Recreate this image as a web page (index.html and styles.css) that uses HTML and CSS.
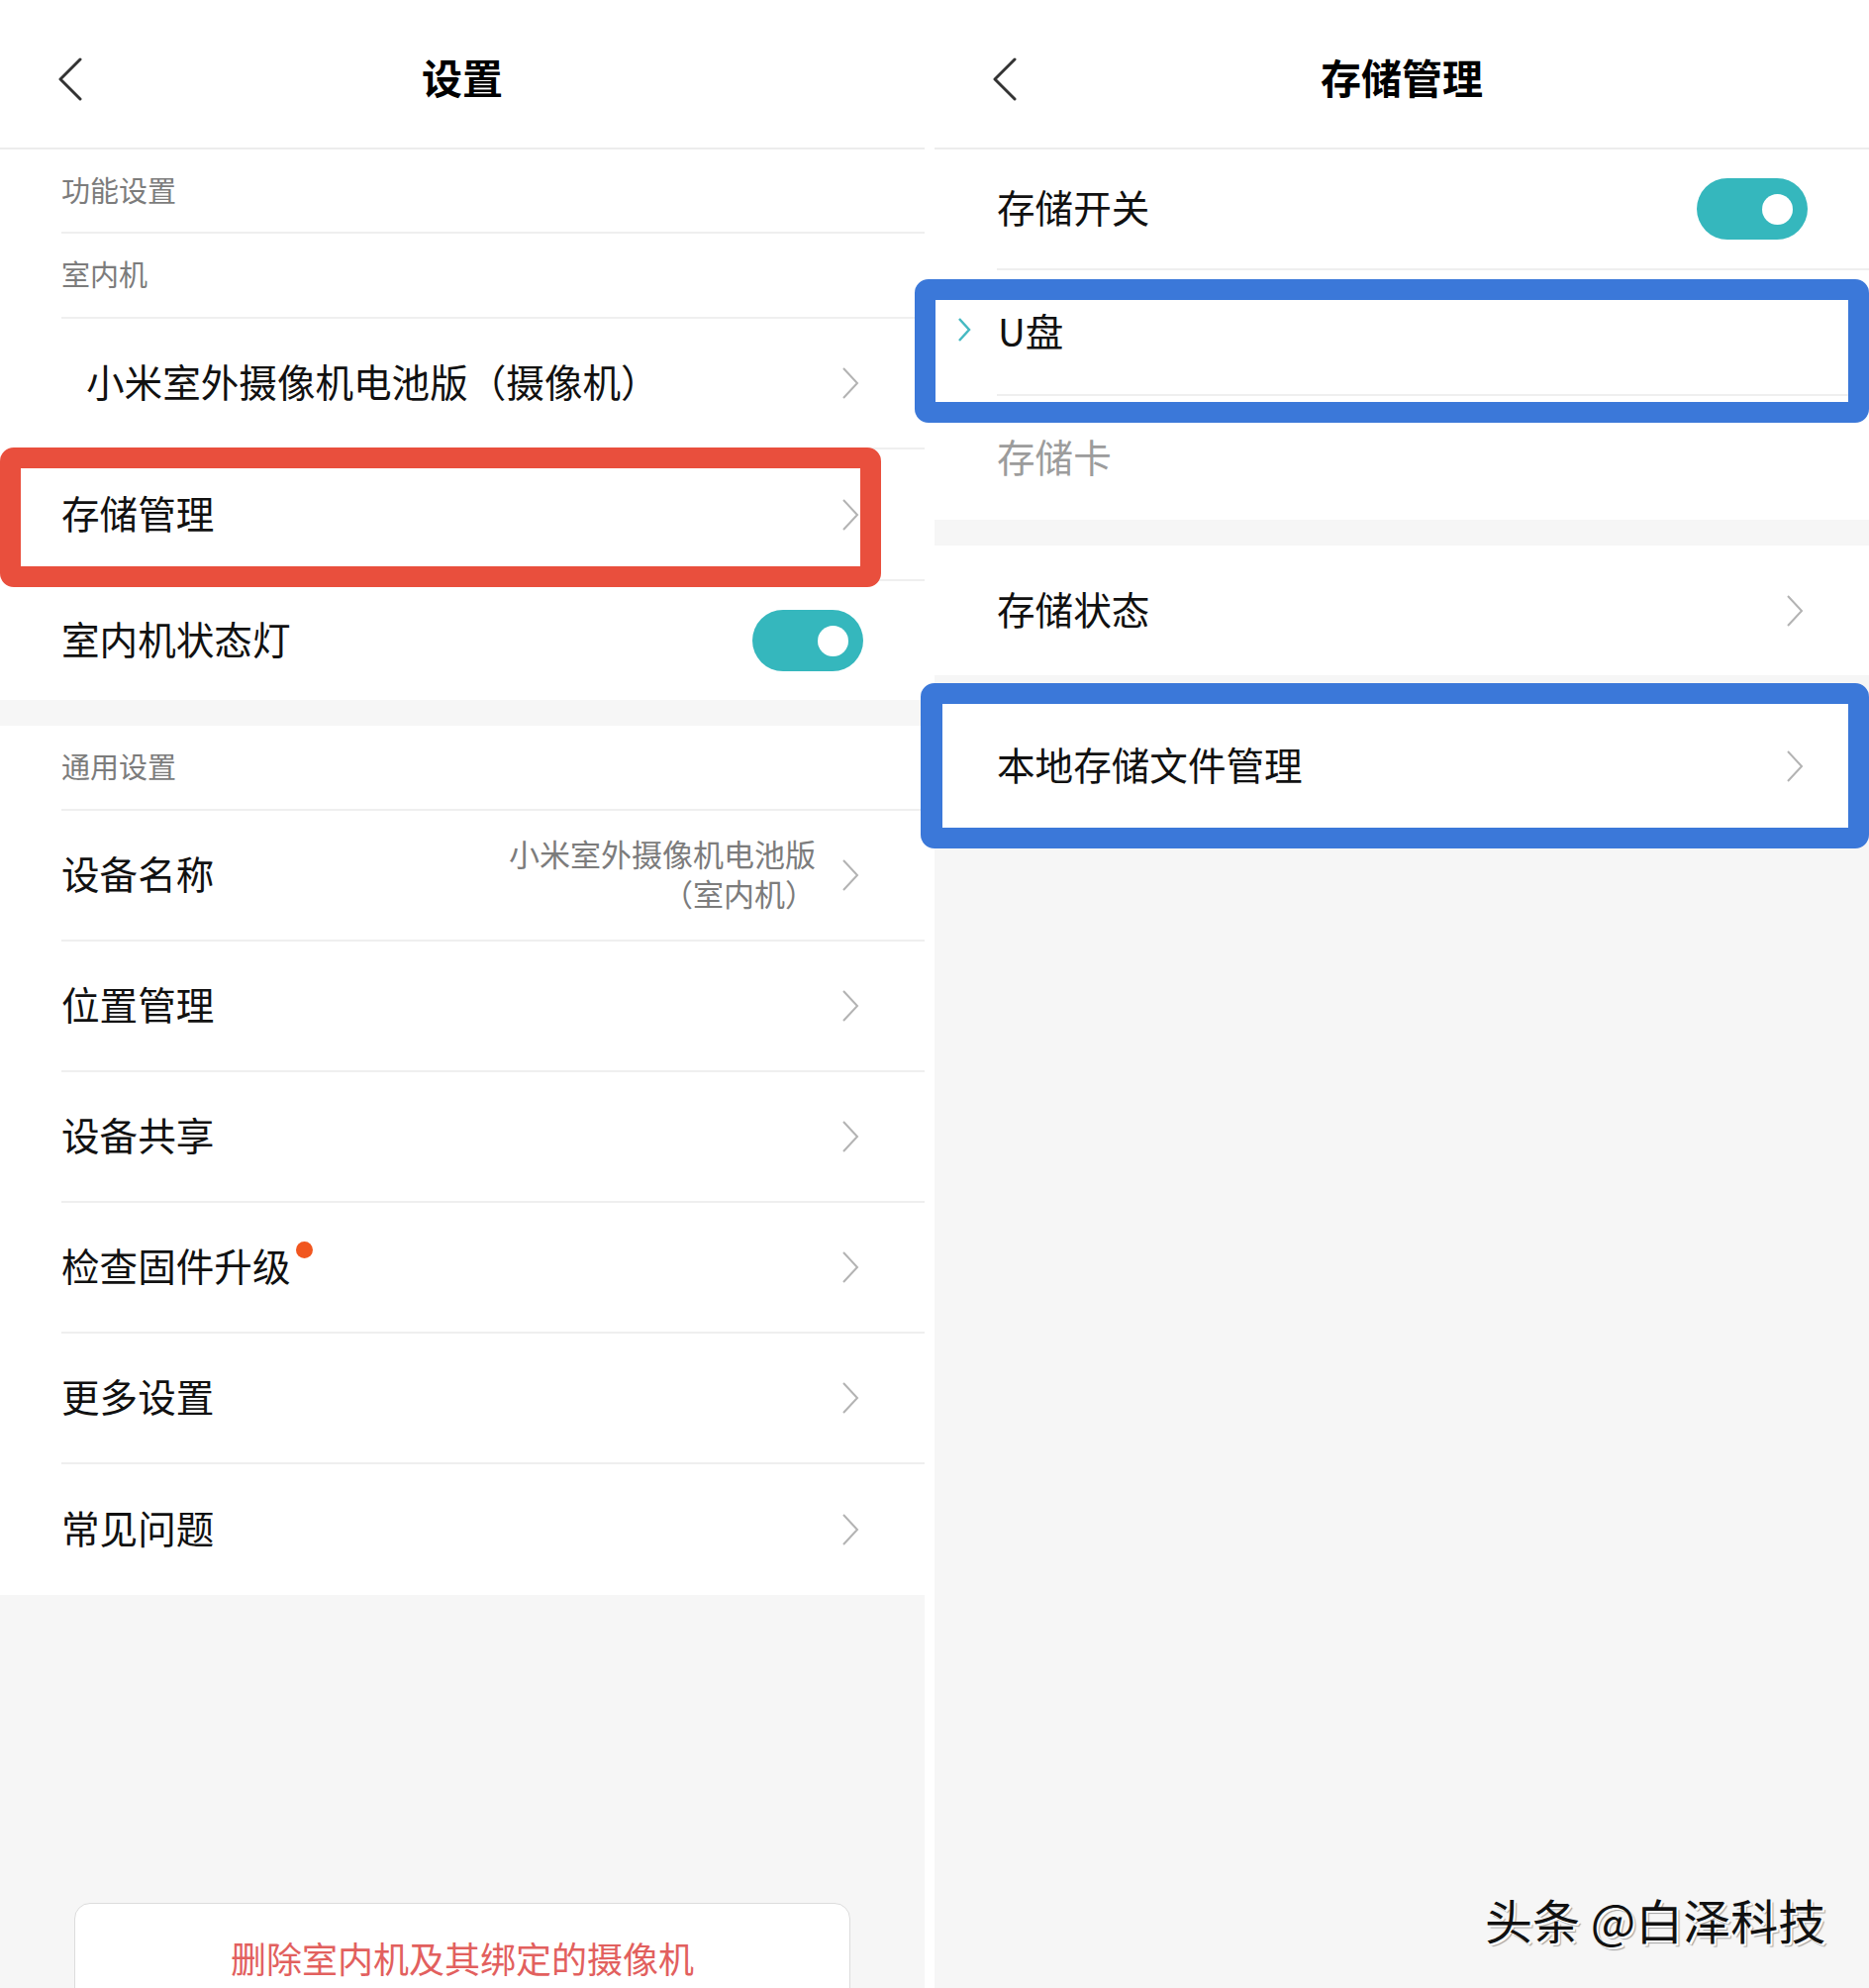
FILE: index.html
```html
<!DOCTYPE html>
<html lang="zh-CN">
<head>
<meta charset="utf-8">
<title>设置</title>
<link rel="stylesheet" href="styles.css">
</head>
<body>
<div class="page">
  <section class="panel panel-left">
    <header class="nav">
      <span class="back"><svg width="26" height="44" viewBox="0 0 26 44"><polyline points="23,2 3,22 23,42" fill="none" stroke="#333" stroke-width="3" stroke-linecap="round" stroke-linejoin="round"/></svg></span>
      <h1 class="title">设置</h1>
      <span></span>
    </header>
    <div class="group">
      <div class="sec sec-a sep">功能设置</div>
      <div class="sec sec-b sep">室内机</div>
      <div class="row row-cam sep"><span class="label">小米室外摄像机电池版（摄像机）</span><svg class="chev" width="18" height="32" viewBox="0 0 18 32"><polyline points="2,1 16,16 2,31" fill="none" stroke="#b3b3b3" stroke-width="2"/></svg></div>
      <div class="row row-store sep"><span class="label">存储管理</span><svg class="chev" width="18" height="32" viewBox="0 0 18 32"><polyline points="2,1 16,16 2,31" fill="none" stroke="#b3b3b3" stroke-width="2"/></svg></div>
      <div class="row row-light"><span class="label">室内机状态灯</span><span class="toggle"><span class="knob"></span></span></div>
    </div>
    <div class="group gap">
      <div class="sec sec-b sep">通用设置</div>
      <div class="row sep"><span class="label">设备名称</span><span class="value"><span class="vline">小米室外摄像机电池版</span><span class="vline">（室内机）</span></span><svg class="chev chev-after" width="18" height="32" viewBox="0 0 18 32"><polyline points="2,1 16,16 2,31" fill="none" stroke="#b3b3b3" stroke-width="2"/></svg></div>
      <div class="row sep"><span class="label">位置管理</span><svg class="chev" width="18" height="32" viewBox="0 0 18 32"><polyline points="2,1 16,16 2,31" fill="none" stroke="#b3b3b3" stroke-width="2"/></svg></div>
      <div class="row sep"><span class="label">设备共享</span><svg class="chev" width="18" height="32" viewBox="0 0 18 32"><polyline points="2,1 16,16 2,31" fill="none" stroke="#b3b3b3" stroke-width="2"/></svg></div>
      <div class="row sep"><span class="label">检查固件升级<i class="dot"></i></span><svg class="chev" width="18" height="32" viewBox="0 0 18 32"><polyline points="2,1 16,16 2,31" fill="none" stroke="#b3b3b3" stroke-width="2"/></svg></div>
      <div class="row sep"><span class="label">更多设置</span><svg class="chev" width="18" height="32" viewBox="0 0 18 32"><polyline points="2,1 16,16 2,31" fill="none" stroke="#b3b3b3" stroke-width="2"/></svg></div>
      <div class="row"><span class="label">常见问题</span><svg class="chev" width="18" height="32" viewBox="0 0 18 32"><polyline points="2,1 16,16 2,31" fill="none" stroke="#b3b3b3" stroke-width="2"/></svg></div>
    </div>
    <button class="danger">删除室内机及其绑定的摄像机</button>
    <div class="mark mark-red"></div>
  </section>

  <section class="panel panel-right">
    <header class="nav">
      <span class="back"><svg width="26" height="44" viewBox="0 0 26 44"><polyline points="23,2 3,22 23,42" fill="none" stroke="#333" stroke-width="3" stroke-linecap="round" stroke-linejoin="round"/></svg></span>
      <h1 class="title">存储管理</h1>
      <span></span>
    </header>
    <div class="group">
      <div class="row row-switch sep"><span class="label">存储开关</span><span class="toggle"><span class="knob"></span></span></div>
      <div class="row row-usb sep"><svg class="chev-teal" width="16" height="26" viewBox="0 0 16 26"><polyline points="3,2 13,13 3,24" fill="none" stroke="#45b9c2" stroke-width="2.5"/></svg><span class="label">U盘</span></div>
      <div class="row row-card"><span class="label muted">存储卡</span></div>
    </div>
    <div class="group gap">
      <div class="row row-status"><span class="label">存储状态</span><svg class="chev" width="18" height="32" viewBox="0 0 18 32"><polyline points="2,1 16,16 2,31" fill="none" stroke="#b3b3b3" stroke-width="2"/></svg></div>
    </div>
    <div class="group gap-s">
      <div class="row row-files"><span class="label">本地存储文件管理</span><svg class="chev" width="18" height="32" viewBox="0 0 18 32"><polyline points="2,1 16,16 2,31" fill="none" stroke="#b3b3b3" stroke-width="2"/></svg></div>
    </div>
    <div class="mark mark-blue mark-blue-1"></div>
    <div class="mark mark-blue mark-blue-2"></div>
    <div class="watermark">头条 @白泽科技</div>
  </section>
</div>
</body>
</html>
```

FILE: styles.css
```css
html, body {
  margin: 0;
  padding: 0;
  background: #fff;
}

body {
  font-family: "Noto Sans CJK SC", "Noto Sans", sans-serif;
  color: #111;
}

.page {
  display: flex;
  gap: 10px;
  width: 1888px;
  height: 2008px;
  overflow: hidden;
}

.panel {
  position: relative;
  display: flex;
  flex-direction: column;
  background: #f6f6f6;
}

.panel-left { width: 934px; }
.panel-right { width: 944px; }

.nav {
  box-sizing: border-box;
  height: 151px;
  padding-top: 6px;
  border-bottom: 2px solid #ececec;
  background: #fff;
  display: grid;
  grid-template-columns: 1fr auto 1fr;
  align-items: center;
  flex-shrink: 0;
}

.back {
  display: flex;
  padding-left: 58px;
  margin-top: 4px;
}

.title {
  margin: 0;
  font-size: 41px;
  font-weight: 700;
  line-height: 1;
  color: #000;
}

.group {
  background: #fff;
  padding-left: 62px;
  flex-shrink: 0;
}

.panel-right .group { padding-left: 63px; }

.gap { margin-top: 26px; }
.gap-s { margin-top: 25px; }

.sep { border-bottom: 2px solid #efefef; }

.sec {
  box-sizing: border-box;
  display: flex;
  align-items: center;
  padding-bottom: 3px;
  font-size: 29px;
  line-height: 1;
  color: #7c7c7c;
}

.sec-a { height: 85px; }
.sec-b { height: 86px; }

.row {
  box-sizing: border-box;
  display: flex;
  align-items: center;
  height: 132px;
  padding-right: 62px;
  padding-bottom: 5px;
  font-size: 38.6px;
  color: #111;
}

.row-cam { padding-left: 25px; }
.row-store { height: 133px; }
.row-light { height: 120px; }
.row-switch { height: 122px; }
.row-usb { height: 127px; }
.row-card { height: 125px; }
.row-status { height: 131px; }
.row-files { height: 133px; }

.label {
  position: relative;
  line-height: 1;
}

.muted { color: #9c9c9c; }

.value {
  margin-left: auto;
  padding-top: 5px;
  display: flex;
  flex-direction: column;
  align-items: flex-end;
  gap: 9px;
  font-family: "Liberation Sans", "Noto Sans CJK SC", sans-serif;
  font-size: 31px;
  line-height: 1;
  color: #7c7c7c;
  text-align: right;
}

.vline { display: block; }

.chev {
  margin-left: auto;
  margin-right: 4px;
  margin-top: 5px;
  flex-shrink: 0;
}

.chev-after { margin-left: 26px; }

.chev-teal {
  margin-left: -41px;
  margin-right: 26px;
  flex-shrink: 0;
}

.dot {
  position: absolute;
  left: calc(100% + 6px);
  top: -4px;
  width: 17px;
  height: 17px;
  border-radius: 50%;
  background: #f1561f;
}

.toggle {
  margin-left: auto;
  margin-top: 5px;
  box-sizing: border-box;
  width: 112px;
  height: 62px;
  border-radius: 31px;
  background: #35b7bd;
  display: flex;
  align-items: center;
  justify-content: flex-end;
  padding-right: 15px;
  flex-shrink: 0;
}

.knob {
  width: 31px;
  height: 31px;
  border-radius: 50%;
  background: #fff;
}

.danger {
  flex-shrink: 0;
  margin: 311px 75px 0;
  height: 114px;
  border: 1px solid #dcdcdc;
  border-radius: 16px;
  background: #fff;
  font: inherit;
  font-size: 36px;
  line-height: 1;
  color: #e2605e;
  padding: 0 0 4px;
}

.mark {
  position: absolute;
  box-sizing: border-box;
  border-width: 21px;
  border-style: solid;
  border-radius: 14px;
}

.mark-red {
  left: 0;
  top: 452px;
  width: 890px;
  height: 141px;
  border-color: #e94f3d;
}

.mark-blue { border-color: #3b78d9; }

.mark-blue-1 {
  left: -20px;
  top: 282px;
  width: 964px;
  height: 145px;
}

.mark-blue-2 {
  left: -14px;
  top: 690px;
  width: 958px;
  height: 167px;
  border-width: 21px 21px 21px 22px;
}

.watermark {
  position: absolute;
  left: 556px;
  top: 1914px;
  font-size: 48px;
  line-height: 1;
  color: #111;
  white-space: nowrap;
  text-shadow: 2px 2px 0 #fff, 3px 3px 1px rgba(0, 0, 0, 0.35);
}
```
